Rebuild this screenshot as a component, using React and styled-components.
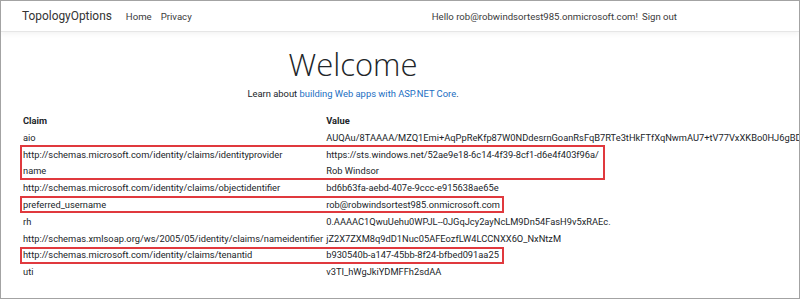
import React from 'react'
import styled, { createGlobalStyle } from 'styled-components'

const GlobalStyle = createGlobalStyle`
  html, body {
    margin: 0;
    padding: 0;
    background: #ffffff;
  }
  body {
    font-family: Roboto, 'Open Sans', Arial, sans-serif;
    color: #212529;
  }
`

const Frame = styled.div`
  width: 800px;
  height: 299px;
  box-sizing: border-box;
  border: 1px solid #a3a3a3;
  overflow: hidden;
  background: #fff;
`

const Navbar = styled.nav`
  height: 30px;
  display: flex;
  align-items: center;
  justify-content: space-between;
  padding: 0 122px 0 21px;
  border-bottom: 1px solid #e6e6e6;
  box-shadow: 0 2px 5px rgba(0, 0, 0, 0.05);
`

const NavGroup = styled.div`
  display: flex;
  align-items: center;
  gap: ${(p) => p.gap || 8}px;
`

const Brand = styled.a`
  font-size: 11.9px;
  color: #333;
  text-decoration: none;
  margin-right: 5px;
`

const NavLink = styled.a`
  font-size: 9.6px;
  color: #3a3a3a;
  text-decoration: none;
`

const Main = styled.main`
  width: 660px;
  padding-left: 22px;
`

const Hero = styled.div`
  text-align: center;
  padding-top: 11px;
`

const Title = styled.h1`
  margin: 0;
  font-family: 'Open Sans', Roboto, sans-serif;
  font-size: 31px;
  font-weight: 300;
  line-height: 43px;
  color: #212529;
`

const Lead = styled.p`
  margin: 0;
  font-size: 9.4px;
  line-height: 15px;

  a {
    color: #1b6ec2;
    text-decoration: none;
  }
`

const ClaimTable = styled.div`
  position: relative;
  display: grid;
  grid-template-columns: max-content max-content;
  column-gap: 3px;
  margin-top: 12px;
  font-size: 9.3px;
  line-height: 16.8px;
  white-space: nowrap;
`

const HeadCell = styled.div`
  font-weight: 700;
`

const Cell = styled.div``

const Highlight = styled.div`
  position: absolute;
  left: -3px;
  top: ${(p) => p.top}px;
  width: ${(p) => p.width}px;
  height: ${(p) => p.height}px;
  border: 2px solid #e0393e;
  box-sizing: border-box;
  pointer-events: none;
`

const claims = [
  ['aio', 'AUQAu/8TAAAA/MZQ1Emi+AqPpReKfp87W0NDdesrnGoanRsFqB7RTe3tHkFTfXqNwmAU7+tV77VxXKBo0HJ6gBDxQn'],
  ['http://schemas.microsoft.com/identity/claims/identityprovider', 'https://sts.windows.net/52ae9e18-6c14-4f39-8cf1-d6e4f403f96a/'],
  ['name', 'Rob Windsor'],
  ['http://schemas.microsoft.com/identity/claims/objectidentifier', 'bd6b63fa-aebd-407e-9ccc-e915638ae65e'],
  ['preferred_username', 'rob@robwindsortest985.onmicrosoft.com'],
  ['rh', '0.AAAAC1QwuUehu0WPJL--0JGqJcy2ayNcLM9Dn54FasH9v5xRAEc.'],
  ['http://schemas.xmlsoap.org/ws/2005/05/identity/claims/nameidentifier', 'jZ2X7ZXM8q9dD1Nuc05AFEozfLW4LCCNXX6O_NxNtzM'],
  ['http://schemas.microsoft.com/identity/claims/tenantid', 'b930540b-a147-45bb-8f24-bfbed091aa25'],
  ['uti', 'v3TI_hWgJkiYDMFFh2sdAA'],
]

const App = () => (
  <>
    <GlobalStyle />
    <Frame>
      <Navbar>
        <NavGroup gap={9}>
          <Brand href="#">TopologyOptions</Brand>
          <NavLink href="#">Home</NavLink>
          <NavLink href="#">Privacy</NavLink>
        </NavGroup>
        <NavGroup gap={4}>
          <NavLink as="span">Hello rob@robwindsortest985.onmicrosoft.com!</NavLink>
          <NavLink href="#">Sign out</NavLink>
        </NavGroup>
      </Navbar>
      <Main>
        <Hero>
          <Title>Welcome</Title>
          <Lead>
            Learn about <a href="#">building Web apps with ASP.NET Core</a>.
          </Lead>
        </Hero>
        <ClaimTable>
          <HeadCell>Claim</HeadCell>
          <HeadCell>Value</HeadCell>
          {claims.map(([claim, value]) => (
            <React.Fragment key={claim}>
              <Cell>{claim}</Cell>
              <Cell>{value}</Cell>
            </React.Fragment>
          ))}
          <Highlight top={32} width={585} height={35} />
          <Highlight top={83} width={484} height={17} />
          <Highlight top={134} width={484} height={17} />
        </ClaimTable>
      </Main>
    </Frame>
  </>
)

export default App
